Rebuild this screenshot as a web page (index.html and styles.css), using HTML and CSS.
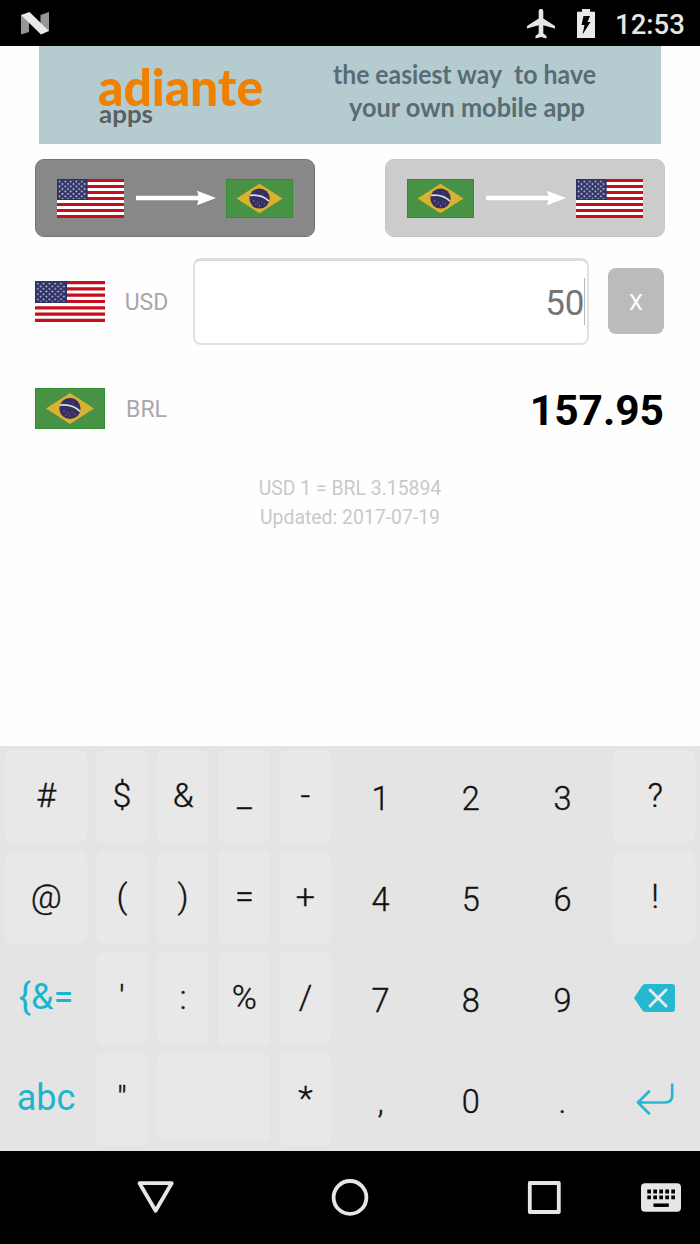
FILE: index.html
```html
<!DOCTYPE html>
<html lang="en">
<head>
<meta charset="utf-8">
<title>Currency converter</title>
<link rel="stylesheet" href="styles.css">
</head>
<body>
<svg class="defs" width="0" height="0" aria-hidden="true">
  <defs>
    <pattern id="stars" x="1.4" y="1.4" width="5.8" height="5.2" patternUnits="userSpaceOnUse">
      <circle cx="1.4" cy="1.3" r=".95" fill="#d2d2e4"/><circle cx="4.3" cy="3.9" r=".95" fill="#d2d2e4"/>
    </pattern>
    <symbol id="us" viewBox="0 0 70 41" preserveAspectRatio="none">
      <rect width="70" height="41" fill="#fff"/>
      <path d="M0 1.58H70M0 7.88H70M0 14.19H70M0 20.5H70M0 26.81H70M0 33.12H70M0 39.42H70" stroke="#c4101c" stroke-width="3.15"/>
      <rect width="32" height="22" fill="#2e3163"/>
      <rect x="1.4" y="1.4" width="29" height="19.5" fill="url(#stars)"/>
    </symbol>
    <symbol id="br" viewBox="0 0 70 41" preserveAspectRatio="none">
      <rect width="70" height="41" fill="#2a8a2c"/>
      <rect x=".7" y=".7" width="68.6" height="39.6" fill="#479244"/>
      <path d="M11 20.5 35 5 59 20.5 35 36Z" fill="#dbb22f"/>
      <circle cx="35" cy="20.5" r="10.6" fill="#352f63"/>
      <path d="M25 17.2Q37 15.5 45 23.4" fill="none" stroke="#d5e2dc" stroke-width="1.7"/>
      <g fill="#a09bc0"><circle cx="29" cy="23" r=".6"/><circle cx="33" cy="25" r=".6"/><circle cx="37" cy="24" r=".5"/><circle cx="40" cy="26" r=".6"/><circle cx="35" cy="28" r=".6"/><circle cx="31" cy="27" r=".5"/><circle cx="38" cy="15" r=".4"/></g>
    </symbol>
    <symbol id="arrow" viewBox="0 0 80 16">
      <path d="M0 5.800H62.500L61 .8 80 8 61 15.200 62.500 10.200H0Z" fill="#fff"/>
    </symbol>
  </defs>
</svg>

<header class="status">
  <svg class="n-logo" width="28" height="24" viewBox="0 0 28 24"><path d="M0 3 8 5V20L0 22.500ZM19.500 3 28 0V19L19.500 15Z" fill="#969696"/><path d="M0 3 8.500 0 28 19 20 22.500Z" fill="#e8e8e8"/></svg>
  <svg class="plane" width="28" height="30" viewBox="0 0 28 30"><path d="M28 19.500V17L16.300 9.500V2.200a2.300 2.300 0 0 0-4.600 0V9.500L0 17V19.500L11.700 16.200V24.500L8.500 27V29.500L14 28 19.500 29.500V27L16.300 24.500V16.200Z" fill="#e6e6e6"/></svg>
  <svg class="battery" width="18" height="29" viewBox="0 0 18 29"><path d="M0 2.800H5V0H13V2.800H18V29H0Z" fill="#e9e9e9"/><path d="M6.500 7H13L10.500 13H13.500L5.500 25.500 7.500 16H4.500Z" fill="#000"/></svg>
  <span class="clock">12:53</span>
</header>

<main class="app">
  <svg class="banner" width="622" height="98" viewBox="39 46 622 98">
    <text class="brand" x="98" y="106" textLength="165" lengthAdjust="spacingAndGlyphs">adiante</text>
    <text class="brand-sub" x="99" y="123" textLength="54" lengthAdjust="spacingAndGlyphs">apps</text>
    <text class="slogan" x="333" y="84" textLength="169" lengthAdjust="spacingAndGlyphs">the easiest way</text>
    <text class="slogan" x="514" y="84" textLength="82" lengthAdjust="spacingAndGlyphs">to have</text>
    <text class="slogan" x="349" y="117" textLength="236" lengthAdjust="spacingAndGlyphs">your own mobile app</text>
  </svg>

  <div class="switches">
    <button class="switch active">
      <svg class="mini"><use href="#us"/></svg><svg class="arrow"><use href="#arrow"/></svg><svg class="mini"><use href="#br"/></svg>
    </button>
    <button class="switch">
      <svg class="mini"><use href="#br"/></svg><svg class="arrow"><use href="#arrow"/></svg><svg class="mini"><use href="#us"/></svg>
    </button>
  </div>

  <div class="row source">
    <svg class="flag"><use href="#us"/></svg>
    <span class="code">USD</span>
    <div class="amount"><span>50</span><i class="caret"></i></div>
    <button class="clear">X</button>
  </div>
  <div class="row target">
    <svg class="flag"><use href="#br"/></svg>
    <span class="code">BRL</span>
    <strong class="result">157.95</strong>
  </div>
  <div class="rate"><div>USD 1 = BRL 3.15894</div><div>Updated: 2017-07-19</div></div>
</main>

<section class="keyboard">
  <div class="key wide">#</div><div class="key">$</div><div class="key">&amp;</div><div class="key">_</div><div class="key">-</div>
  <div class="num">1</div><div class="num">2</div><div class="num">3</div><div class="key last">?</div>

  <div class="key wide">@</div><div class="key">(</div><div class="key">)</div><div class="key">=</div><div class="key">+</div>
  <div class="num">4</div><div class="num">5</div><div class="num">6</div><div class="key last">!</div>

  <div class="mode">{&amp;=</div><div class="key">'</div><div class="key">:</div><div class="key">%</div><div class="key">/</div>
  <div class="num">7</div><div class="num">8</div><div class="num">9</div>
  <div class="action"><svg width="41" height="28" viewBox="0 0 41 28"><path d="M0 14 8 2Q9.300 0 11.500 0H38Q41 0 41 3V25Q41 28 38 28H11.500Q9.300 28 8 26Z" fill="#27b8d1"/><path d="M16 6 32 22M32 6 16 22" stroke="#e8eced" stroke-width="2.900" stroke-linecap="round"/></svg></div>

  <div class="mode abc">abc</div><div class="key">"</div><div class="key space"></div><div class="key">*</div>
  <div class="num">,</div><div class="num">0</div><div class="num">.</div>
  <div class="action enter"><svg width="38" height="32" viewBox="0 0 38 32"><path d="M36.200 1.500V13Q36.200 19.500 29 19.500H2M13 8.500 2 19.500 13 30.500" fill="none" stroke="#27b8d1" stroke-width="2.700" stroke-linecap="round" stroke-linejoin="round"/></svg></div>
</section>

<nav class="navbar">
  <svg width="700" height="93" viewBox="0 1151 700 93">
    <g fill="none" stroke="#e6e6e6" stroke-width="3.800" stroke-linejoin="round">
      <path d="M139.500 1183.200H171.700L155.600 1210.800Z"/>
      <circle cx="350" cy="1197.400" r="16.400"/>
      <rect x="529.800" y="1183" width="29" height="29"/>
    </g>
    <rect x="641" y="1183.300" width="40" height="28.500" rx="4" fill="#e6e6e6"/>
    <path d="M647.300 1191.500H675M647.300 1197.400H675" stroke="#000" stroke-width="3.800" stroke-dasharray="3.700 2.300"/>
    <path d="M653.500 1205.200H668.800" stroke="#000" stroke-width="3.500"/>
  </svg>
</nav>
</body>
</html>
```

FILE: styles.css
```css
* { box-sizing: border-box; }
body {
  margin: 0;
  width: 700px;
  height: 1244px;
  display: flex;
  flex-direction: column;
  background: #fefefe;
  font-family: Roboto, "Liberation Sans", sans-serif;
  overflow: hidden;
}
svg { display: block; flex: none; }
button { font: inherit; border: 0; padding: 0; }
.defs { height: 0; width: 0; }

.status {
  flex: none;
  height: 46px;
  background: #000;
  display: flex;
  align-items: center;
  padding: 0 15px 0 21px;
}
.n-logo { margin-top: 1px; }
.plane { margin-left: 478px; margin-top: 1px; }
.battery { margin-left: 22px; margin-top: 1px; }
.clock {
  margin-left: 20px;
  margin-top: 3px;
  color: #e6e6e6;
  font-size: 27.5px;
  font-weight: 500;
  line-height: 32px;
}

.app { height: 700px; flex: none; padding: 0 35px; }
.banner { margin: 0 4px; background: #b4cccf; }
.brand { font: 900 51px Lato, sans-serif; fill: #f08000; }
.brand-sub { font: 700 25px Lato, sans-serif; fill: #5c5e62; }
.slogan { font: 700 26px Lato, sans-serif; fill: #586c75; }

.switches { display: flex; justify-content: space-between; margin-top: 15px; }
.switch {
  width: 280px;
  height: 78px;
  border-radius: 9px;
  border: 1px solid #c6c6c6;
  background: #ccc;
  display: flex;
  align-items: center;
  padding-left: 21px;
}
.switch.active { background: #888; border-color: #747474; }
.mini { width: 67px; height: 39px; }
.arrow { width: 80px; height: 16px; margin: 0 10px 0 12px; }

.row { display: flex; align-items: center; }
.source { margin-top: 21px; height: 86px; }
.flag { width: 70px; height: 41px; }
.code { width: 82px; padding: 3px 0 0 1px; text-align: center; color: #a8a8a8; font-size: 23px; }
.amount {
  margin-left: 6px;
  width: 396px;
  height: 87px;
  border: 2px solid #e0e0e0;
  border-top: 3px solid #dcdcdc;
  border-radius: 8px;
  background: #fff;
  display: flex;
  align-items: center;
  justify-content: flex-end;
  padding-right: 2px;
  color: #757575;
  font-size: 35px;
}
.amount span { margin-right: -1px; padding-top: 3px; }
.caret { width: 1.500px; height: 47px; background: #b5b5b5; }
.clear {
  margin-left: 19px;
  width: 56px;
  height: 66px;
  border-radius: 8px;
  background: #bbb;
  color: #fff;
  font-size: 22px;
  padding-top: 2px;
}
.target { margin-top: 43px; height: 42px; }
.result { margin-left: auto; margin-right: 1px; font-size: 42.500px; line-height: 42px; color: #000; padding-top: 5px; }
.rate { margin-top: 45px; text-align: center; color: #c9c9c9; font-size: 19.400px; line-height: 29.300px; }

.keyboard {
  flex: none;
  height: 405px;
  background: #e4e4e4;
  display: grid;
  grid-template-columns: 91px 61px 61.200px 61.200px 61.200px 90px 90.500px 92.900px 91px;
  grid-template-rows: repeat(4, 101.100px);
  color: #111;
  font-weight: 300;
  -webkit-text-stroke: .35px #111;
}
.key, .num, .mode, .action { display: flex; align-items: center; justify-content: center; }
.key {
  margin: 4px 4.500px;
  border-radius: 8px;
  background: #e8e8e8;
  font-size: 34px;
  padding: 0 0 3px 1px;
}
.key.wide { margin-left: 5px; }
.key.last { margin-right: 5px; padding-left: 2px; }
.key.space { grid-column: span 2; margin-bottom: 8px; }
.num { font-size: 32.500px; padding-top: 4px; }
.mode { color: #1cb5d0; font-size: 36px; font-weight: 400; padding: 0 0 3px 1px; -webkit-text-stroke: 0; }
.action { padding: 0 0 2px 1px; }
.enter { padding-bottom: 1px; }
.navbar { flex: none; height: 93px; background: #000; }
```
